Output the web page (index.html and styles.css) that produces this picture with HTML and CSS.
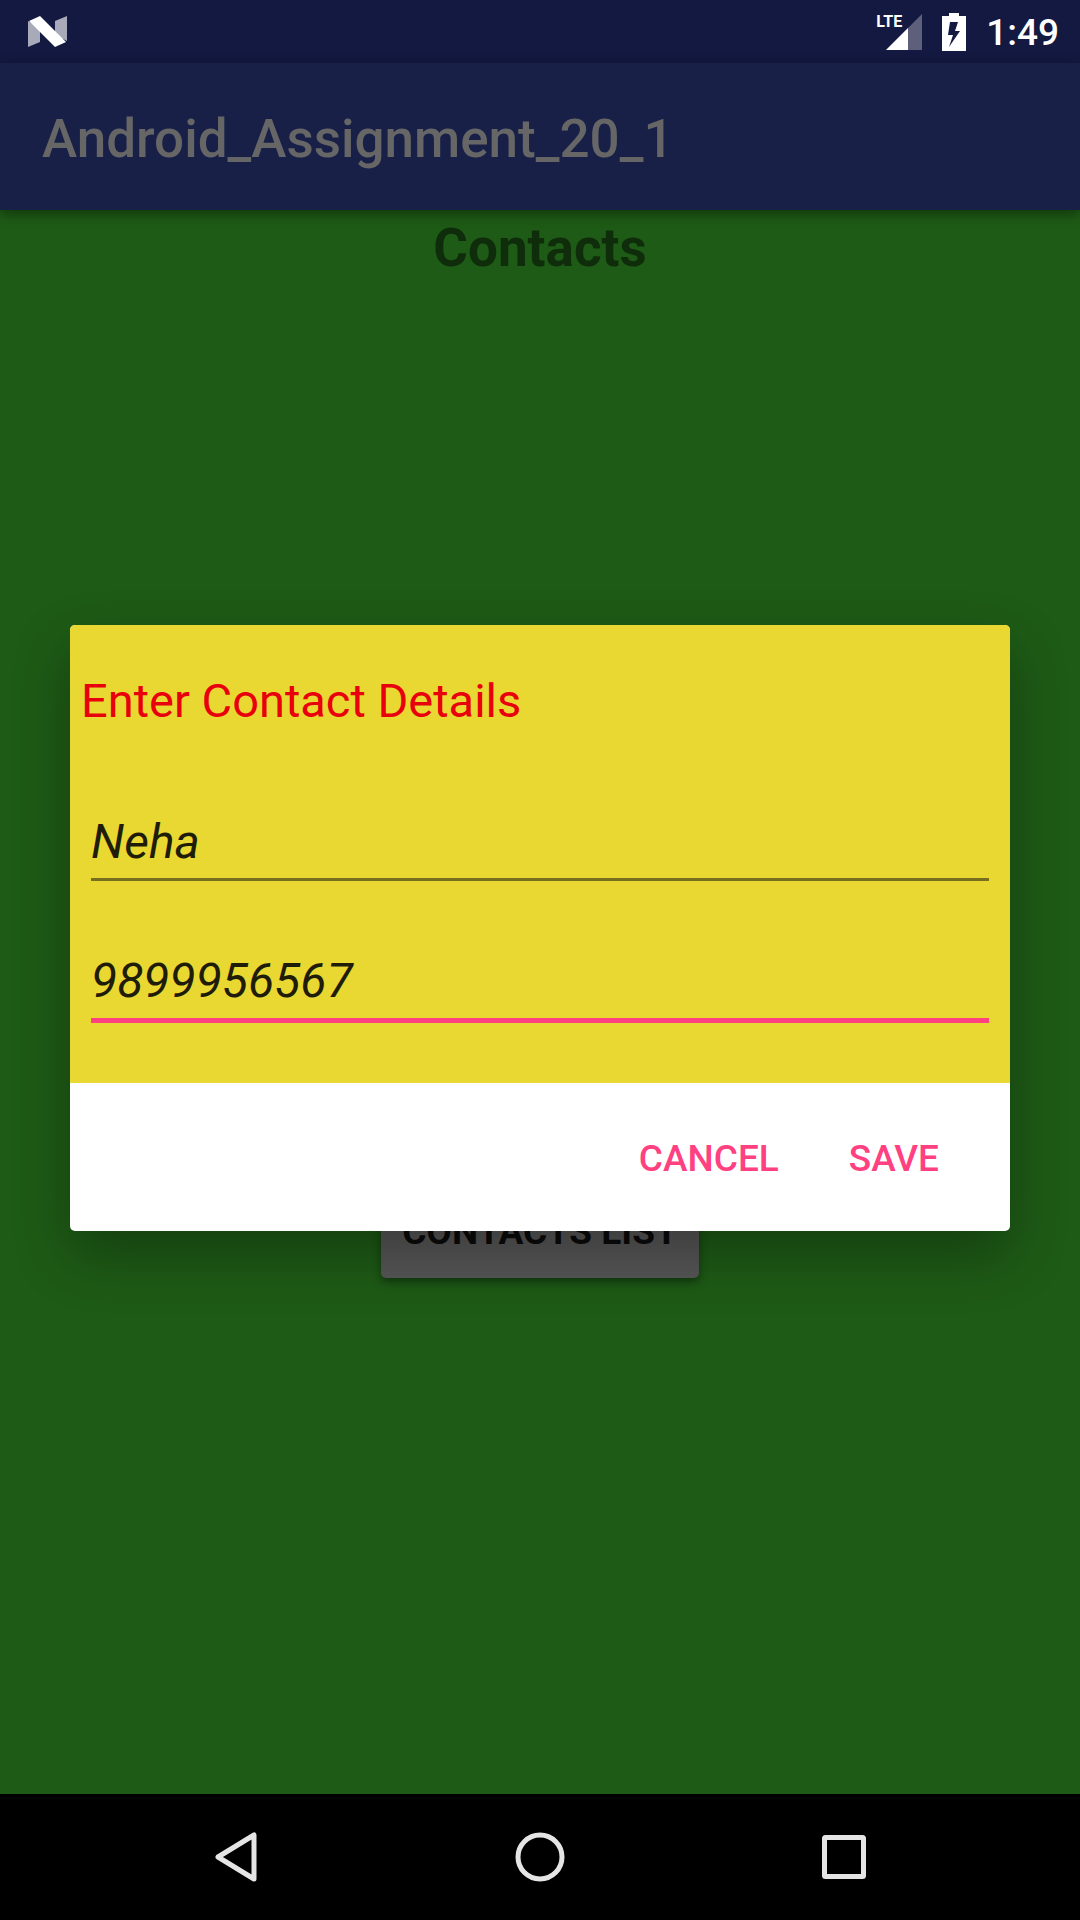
FILE: index.html
```html
<!DOCTYPE html>
<html lang="en">
<head>
  <meta charset="utf-8">
  <meta name="viewport" content="width=device-width, initial-scale=1">
  <title>Android_Assignment_20_1</title>
  <link rel="stylesheet" href="styles.css">
</head>
<body>
  <header class="status-bar">
    <svg class="notification-icon" viewBox="0 0 39 31" aria-hidden="true">
      <path d="M0 5 12 12V26L0 31Z" fill="#a8a9b9"/>
      <path d="M27 5 39 0V25L27 19Z" fill="#a8a9b9"/>
      <path d="M1 5 12 0 38 26 27 31Z" fill="#fff"/>
    </svg>
    <div class="status-icons">
      <div class="signal">
        <svg viewBox="0 0 36 36" aria-hidden="true">
          <path d="M36 0V36H0Z" fill="#5d5f7b"/>
          <path d="M22 14V36H0Z" fill="#fff"/>
        </svg>
        <span class="signal-type">LTE</span>
      </div>
      <svg class="battery" viewBox="0 0 24 38" aria-hidden="true">
        <path fill="#fff" fill-rule="evenodd" d="M7 0H17V3H24V38H0V3H7ZM8 9 6 22H11L7 34 18 18H13L16 9Z"/>
      </svg>
      <time class="clock">1:49</time>
    </div>
  </header>

  <div class="stage">
    <div class="activity">
      <header class="app-bar">
        <h1 class="app-title">Android_Assignment_20_1</h1>
      </header>
      <main class="content">
        <h2 class="heading">Contacts</h2>
        <button class="list-button" type="button">CONTACTS LIST</button>
      </main>
    </div>

    <div class="overlay">
      <form class="dialog" role="dialog" aria-labelledby="dialog-title">
        <div class="dialog-body">
          <h2 class="dialog-title" id="dialog-title">Enter Contact Details</h2>
          <input class="field" type="text" aria-label="Name" value="Neha">
          <input class="field field-active" type="tel" aria-label="Phone number" value="9899956567">
        </div>
        <div class="dialog-actions">
          <button class="dialog-button" type="button">CANCEL</button>
          <button class="dialog-button" type="button">SAVE</button>
        </div>
      </form>
    </div>
  </div>

  <nav class="nav-bar">
    <button class="nav-button" type="button" aria-label="Back">
      <svg viewBox="0 0 50 50"><path d="M43 3V47L7 25Z"/></svg>
    </button>
    <button class="nav-button" type="button" aria-label="Home">
      <svg viewBox="0 0 50 50"><circle cx="25" cy="25" r="22"/></svg>
    </button>
    <button class="nav-button" type="button" aria-label="Recent apps">
      <svg viewBox="0 0 50 50"><rect x="5.500" y="5.500" width="39" height="39" rx="1"/></svg>
    </button>
  </nav>
</body>
</html>
```

FILE: styles.css
```css
* {
  box-sizing: border-box;
}

body {
  margin: 0;
  min-height: 100vh;
  display: flex;
  flex-direction: column;
  background: #1e5b16;
  font-family: Roboto, sans-serif;
}

h1,
h2 {
  margin: 0;
}

button,
input {
  margin: 0;
  padding: 0;
  border: 0;
  border-radius: 0;
  background: none;
  font-family: inherit;
}

svg {
  display: block;
}

/* Status bar */
.status-bar {
  height: 63px;
  padding: 0 21px 0 28px;
  display: flex;
  align-items: center;
  justify-content: space-between;
  background: #131940;
}

.notification-icon {
  width: 39px;
  height: 31px;
}

.status-icons {
  display: flex;
  align-items: center;
  gap: 20px;
}

.signal {
  position: relative;
}

.signal svg {
  width: 36px;
  height: 36px;
}

.signal-type {
  position: absolute;
  top: 0;
  right: 20px;
  color: #fff;
  font: bold 16px/16px "Liberation Sans Narrow", Roboto, sans-serif;
}

.battery {
  width: 24px;
  height: 38px;
}

.clock {
  padding-top: 2px;
  color: #fff;
  font-size: 37px;
  line-height: 44px;
  font-weight: 500;
}

/* The dialog overlay shares one grid cell with the activity below it */
.stage {
  flex: 1;
  display: grid;
}

.activity,
.overlay {
  grid-area: 1 / 1;
}

.activity {
  display: flex;
  flex-direction: column;
}

.app-bar {
  height: 147px;
  padding: 4px 42px 0;
  display: flex;
  align-items: center;
  background: #192048;
  box-shadow: 0 4px 12px rgba(0, 0, 0, 0.4);
}

.app-title {
  color: #666;
  font-size: 53px;
  line-height: 62px;
  font-weight: 500;
}

.content {
  flex: 1;
  display: flex;
  flex-direction: column;
  align-items: center;
}

.content::after {
  content: "";
  flex: 8;
}

.heading {
  flex: 15;
  padding-top: 7px;
  color: #0f2d0b;
  font-size: 53px;
  line-height: 62px;
  font-weight: 700;
}

.list-button {
  height: 94px;
  padding: 0 21px;
  border-radius: 5px;
  background: #565656;
  color: #0b0b0b;
  font-size: 37px;
  font-weight: 700;
  box-shadow: 0 4px 8px rgba(0, 0, 0, 0.4);
}

/* Dialog */
.overlay {
  z-index: 1;
  padding: 0 70px 1px;
  display: flex;
  align-items: center;
}

.dialog {
  flex: 1;
  border-radius: 5px;
  overflow: hidden;
  background: #fff;
  box-shadow: 0 24px 56px rgba(0, 0, 0, 0.3);
}

.dialog-body {
  padding: 48px 21px 60px;
  display: flex;
  flex-direction: column;
  background: #ead832;
}

.dialog-title {
  margin: 0 -10px 60px;
  color: #e8000d;
  font-size: 47px;
  line-height: 56px;
  font-weight: 400;
}

.field {
  width: 100%;
  height: 92px;
  margin-bottom: 46px;
  padding-top: 16px;
  border-bottom: 3px solid #776f1d;
  outline: 0;
  color: #1f1d07;
  font-size: 48px;
  line-height: 56px;
  font-style: italic;
}

.field-active {
  height: 96px;
  margin-bottom: 0;
  border-bottom: 5px solid #ff4081;
}

.dialog-actions {
  height: 148px;
  padding: 4px 50px 0;
  display: flex;
  align-items: center;
  justify-content: flex-end;
  gap: 28px;
}

.dialog-button {
  padding: 0 21px;
  color: #ff4081;
  font-size: 37px;
  line-height: 44px;
  font-weight: 500;
}

/* Navigation bar */
.nav-bar {
  height: 126px;
  padding: 0 84px;
  display: flex;
  background: #000;
}

.nav-button {
  flex: 1;
  display: grid;
  place-items: center;
}

.nav-button svg {
  width: 50px;
  height: 50px;
  fill: none;
  stroke: #e5e5e5;
  stroke-width: 5;
  stroke-linejoin: round;
}
```
